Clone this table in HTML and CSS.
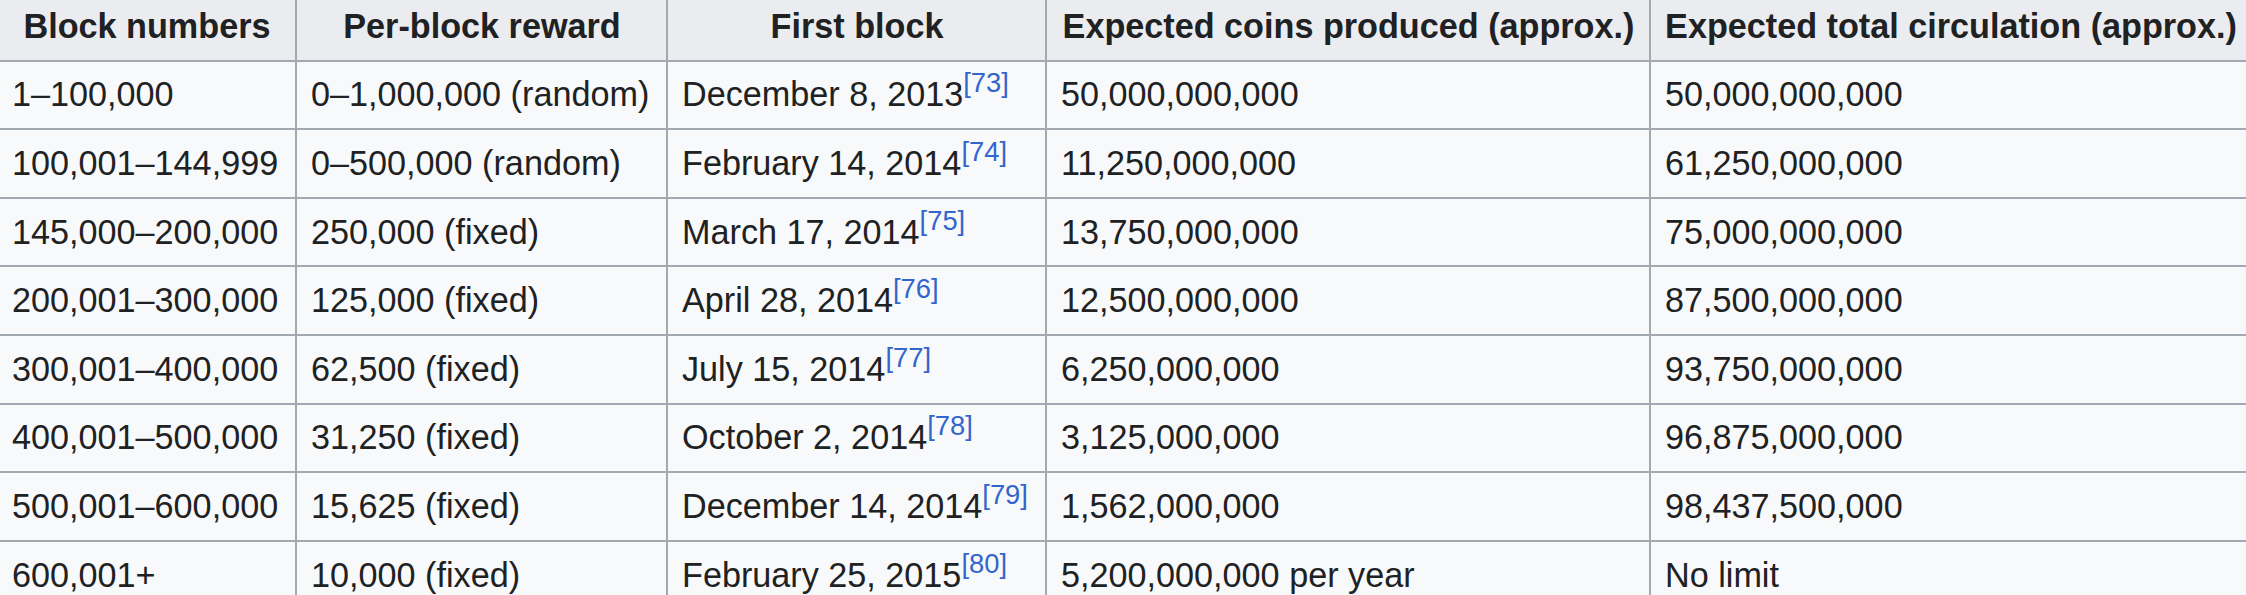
FILE: index.html
```html
<!DOCTYPE html>
<html lang="en">
<head>
<meta charset="utf-8">
<title>Block rewards</title>
<link rel="stylesheet" href="styles.css">
</head>
<body>
<div class="frame">
<table class="wikitable">
  <colgroup>
    <col class="c1"><col class="c2"><col class="c3"><col class="c4"><col class="c5">
  </colgroup>
  <thead>
    <tr>
      <th>Block numbers</th>
      <th>Per-block reward</th>
      <th>First block</th>
      <th>Expected coins produced (approx.)</th>
      <th>Expected total circulation (approx.)</th>
    </tr>
  </thead>
  <tbody>
    <tr><td>1–100,000</td><td>0–1,000,000 (random)</td><td>December 8, 2013<sup class="ref"><a href="#">[73]</a></sup></td><td>50,000,000,000</td><td>50,000,000,000</td></tr>
    <tr><td>100,001–144,999</td><td>0–500,000 (random)</td><td>February 14, 2014<sup class="ref"><a href="#">[74]</a></sup></td><td>11,250,000,000</td><td>61,250,000,000</td></tr>
    <tr><td>145,000–200,000</td><td>250,000 (fixed)</td><td>March 17, 2014<sup class="ref"><a href="#">[75]</a></sup></td><td>13,750,000,000</td><td>75,000,000,000</td></tr>
    <tr><td>200,001–300,000</td><td>125,000 (fixed)</td><td>April 28, 2014<sup class="ref"><a href="#">[76]</a></sup></td><td>12,500,000,000</td><td>87,500,000,000</td></tr>
    <tr><td>300,001–400,000</td><td>62,500 (fixed)</td><td>July 15, 2014<sup class="ref"><a href="#">[77]</a></sup></td><td>6,250,000,000</td><td>93,750,000,000</td></tr>
    <tr><td>400,001–500,000</td><td>31,250 (fixed)</td><td>October 2, 2014<sup class="ref"><a href="#">[78]</a></sup></td><td>3,125,000,000</td><td>96,875,000,000</td></tr>
    <tr><td>500,001–600,000</td><td>15,625 (fixed)</td><td>December 14, 2014<sup class="ref"><a href="#">[79]</a></sup></td><td>1,562,000,000</td><td>98,437,500,000</td></tr>
    <tr><td>600,001+</td><td>10,000 (fixed)</td><td>February 25, 2015<sup class="ref"><a href="#">[80]</a></sup></td><td>5,200,000,000 per year</td><td>No limit</td></tr>
  </tbody>
</table>
</div>
</body>
</html>
```

FILE: styles.css
```css
html, body {
  margin: 0;
  padding: 0;
  overflow: hidden;
  background: #ffffff;
}

.frame {
  margin: -9px 0 0 -4px;
}

.wikitable {
  border-collapse: collapse;
  table-layout: fixed;
  width: 2254px;
  font-family: "Liberation Sans", Arial, sans-serif;
  font-size: 34.2px;
  line-height: 53px;
  color: #202122;
  background: #f8f9fa;
  border: 2px solid #a2a9b1;
}

.c1 { width: 299px; }
.c2 { width: 371px; }
.c3 { width: 379px; }
.c4 { width: 604px; }
.c5 { width: 601px; }

.wikitable th,
.wikitable td {
  border: 2px solid #a2a9b1;
  padding: 6.8px 13px 6.8px 14px;
  white-space: nowrap;
  overflow: hidden;
}

.wikitable th {
  background: #eaecf0;
  font-weight: bold;
  text-align: center;
}

.wikitable td {
  text-align: left;
  background: #f8f9fa;
}

.ref {
  font-size: 80%;
  line-height: 0;
  vertical-align: 14px;
}

.ref a {
  color: #3366cc;
  text-decoration: none;
}
```
